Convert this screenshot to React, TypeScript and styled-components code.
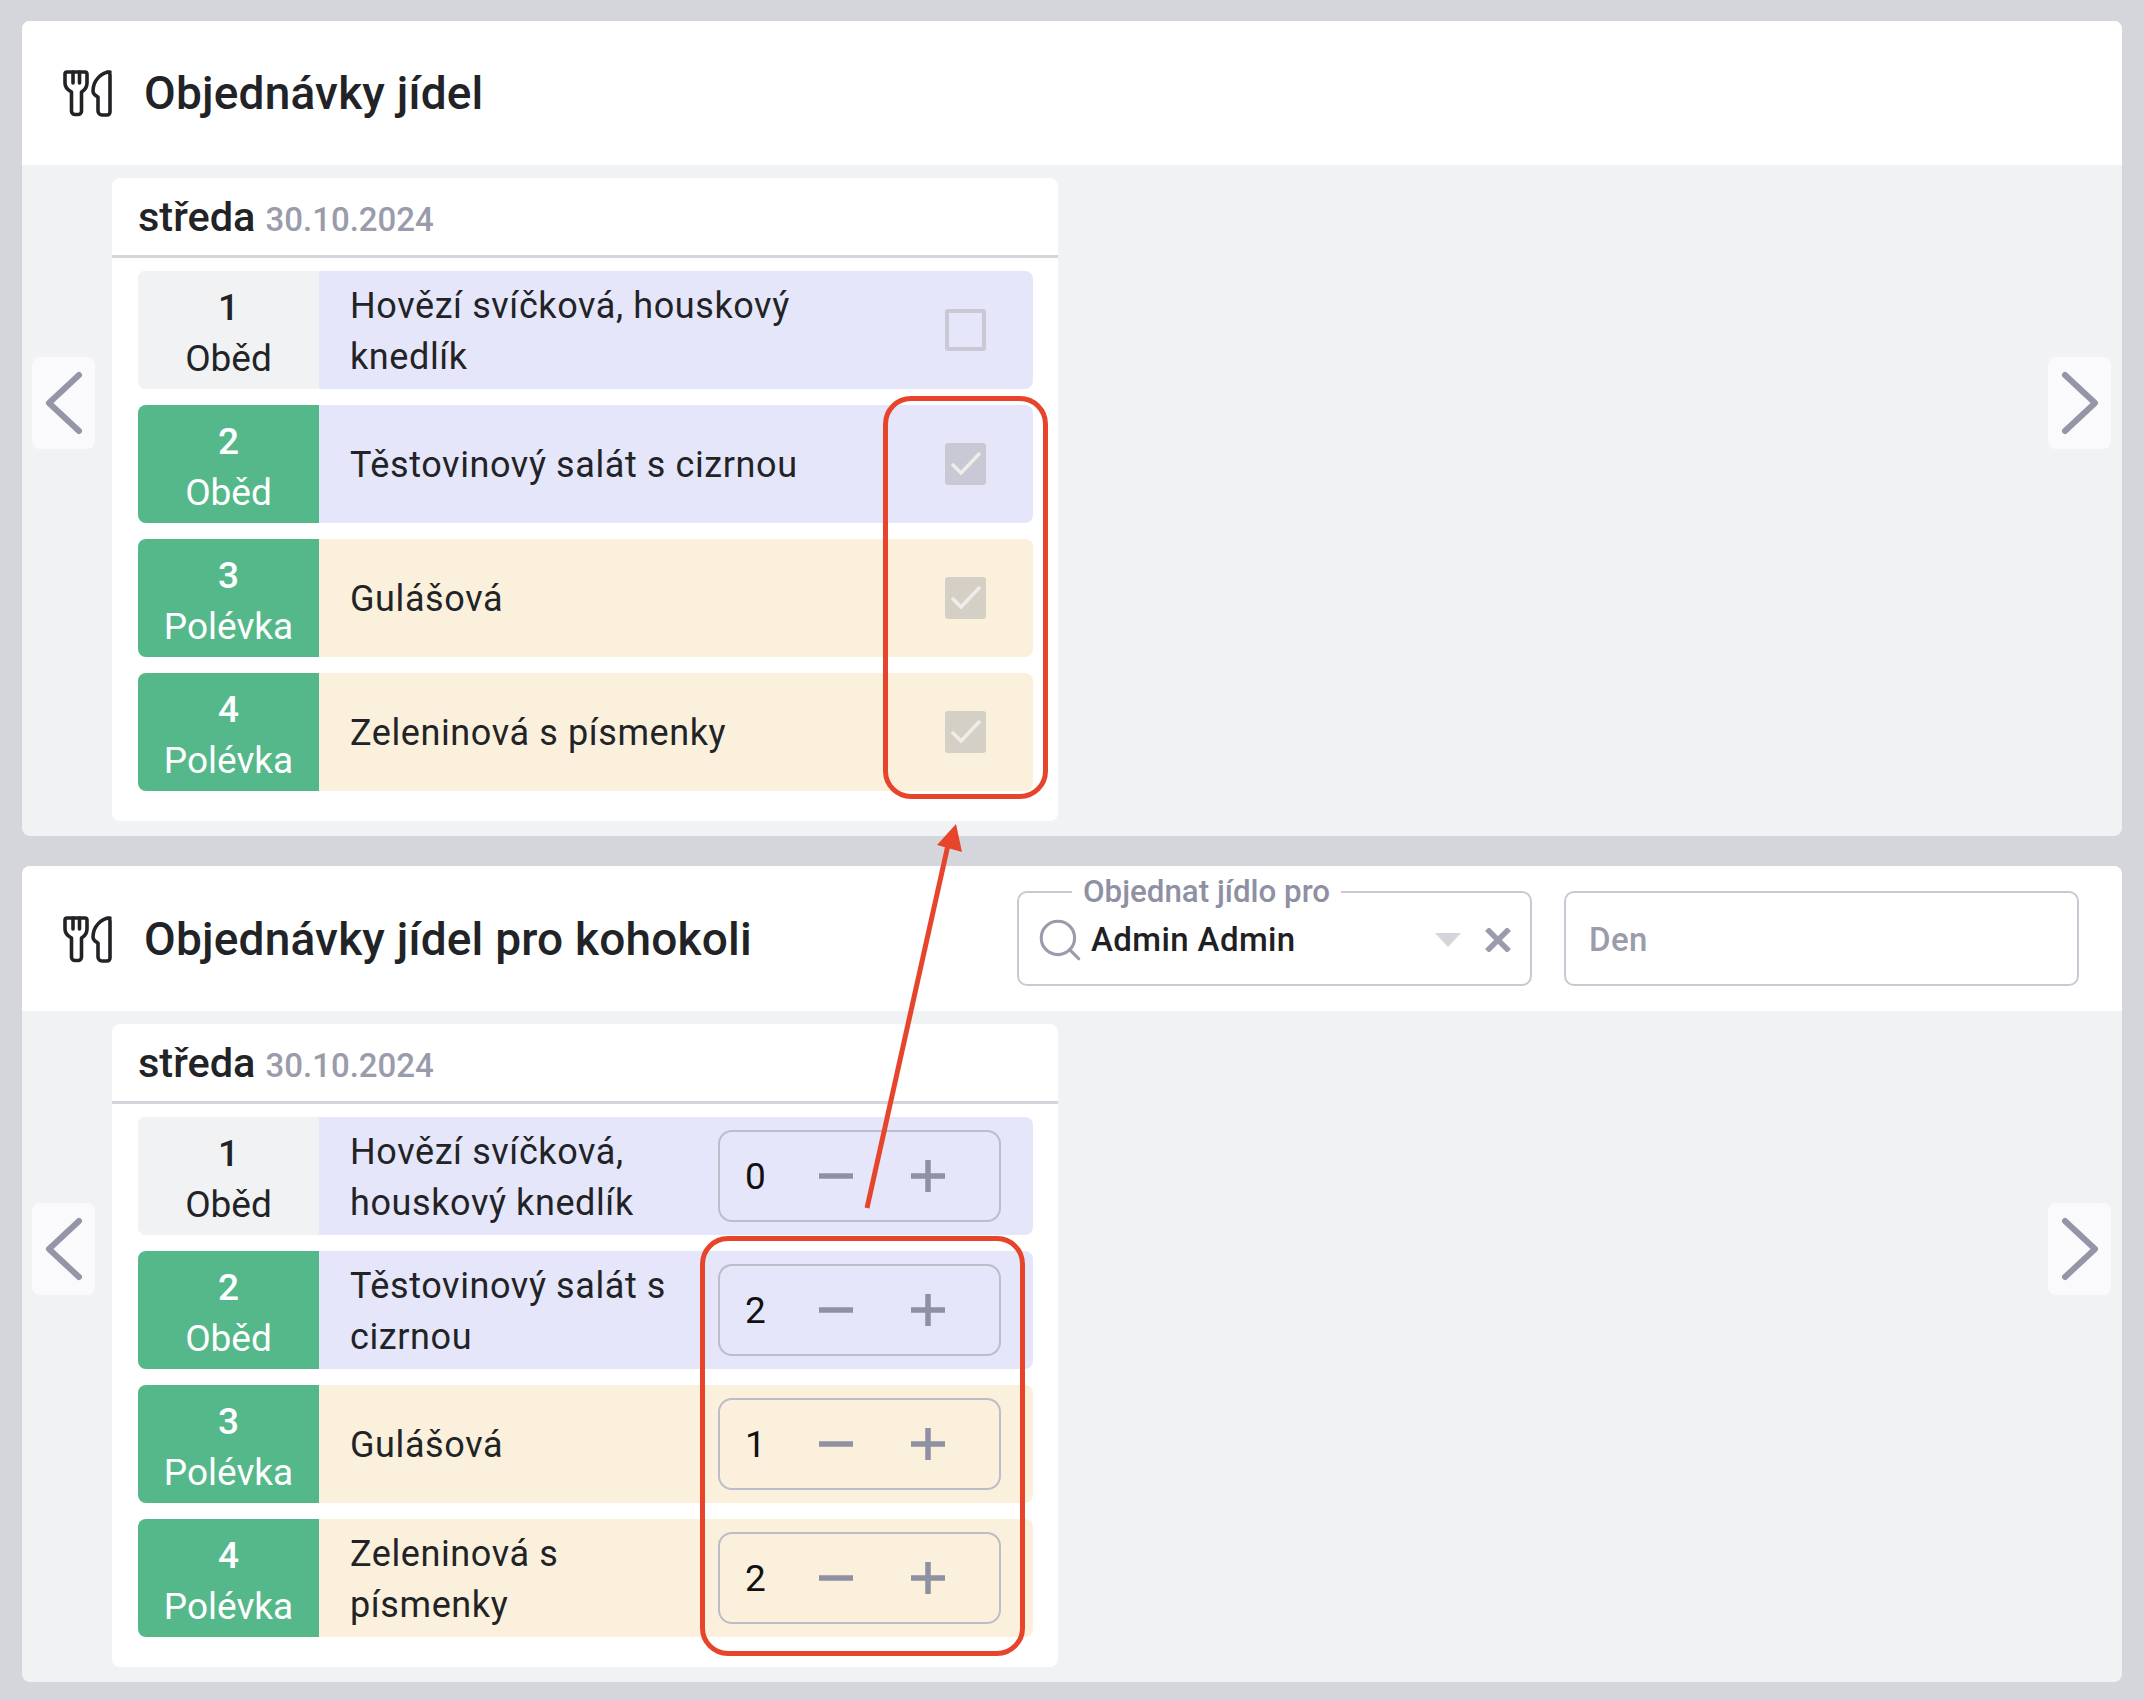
import React from "react";
import styled, { createGlobalStyle } from "styled-components";
import { Search } from "lucide-react";

const GlobalStyle = createGlobalStyle`
  html, body {
    margin: 0;
    padding: 0;
    background: #d5d6dc;
  }
  body {
    font-family: Roboto, "Liberation Sans", sans-serif;
    color: #222326;
  }
`;

const Page = styled.div`
  position: relative;
  box-sizing: border-box;
  width: 2144px;
  height: 1700px;
  padding: 21px 22px;
  display: flex;
  flex-direction: column;
  gap: 30px;
  overflow: hidden;
`;

const Panel = styled.section`
  flex: none;
  background: #f1f2f4;
  border-radius: 8px;
  overflow: hidden;
`;

const PanelHeader = styled.header<{ $tall?: boolean }>`
  box-sizing: border-box;
  height: ${(p) => (p.$tall ? 145 : 144)}px;
  background: #ffffff;
  display: flex;
  align-items: center;
  padding: 0 43px 0 41px;
`;

const PanelTitle = styled.h1`
  margin: 0 0 0 29px;
  font-size: 46px;
  font-weight: 500;
  letter-spacing: 0.2px;
  white-space: nowrap;
`;

const Filters = styled.div`
  margin-left: auto;
  display: flex;
  gap: 32px;
`;

const Field = styled.div`
  position: relative;
  box-sizing: border-box;
  width: 515px;
  height: 95px;
  background: #fff;
  border: 2px solid #c8c9d2;
  border-radius: 10px;
  display: flex;
  align-items: center;
  padding: 2px 19px 0 23px;
  font-size: 33px;
  font-weight: 500;
  letter-spacing: 0.4px;
  color: #1f2023;
`;

const FieldLabel = styled.span`
  position: absolute;
  top: -19px;
  left: 53px;
  padding: 0 11px;
  background: #fff;
  font-size: 31.3px;
  line-height: 36px;
  letter-spacing: 0;
  color: #8f90a3;
`;

const Placeholder = styled.span`
  color: #9a9bab;
`;

const SearchIcon = styled(Search)`
  color: #9a9bab;
  margin: 0 6px 0 -7px;
  flex: none;
`;

const SelectValue = styled.span`
  flex: 1;
`;

const Caret = styled.span`
  width: 0;
  height: 0;
  border-left: 13px solid transparent;
  border-right: 13px solid transparent;
  border-top: 14px solid #d5d6dc;
  margin-right: 24px;
`;

const PanelBody = styled.div`
  display: flex;
  align-items: flex-start;
  padding: 13px 11px 15px 10px;
`;

const NavButton = styled.div<{ $right?: boolean }>`
  flex: none;
  width: 63px;
  height: 92px;
  margin-top: 179px;
  ${(p) => (p.$right ? "margin-left: auto;" : "margin-right: 17px;")}
  background: #fafafd;
  border-radius: 8px;
  display: flex;
  align-items: center;
  justify-content: center;
`;

const DayCard = styled.div`
  flex: none;
  width: 946px;
  background: #fff;
  border-radius: 8px;
`;

const DayHeader = styled.div`
  box-sizing: border-box;
  height: 80px;
  border-bottom: 3px solid #d5d6dc;
  padding: 14px 26px 0;
  font-size: 41.5px;
  line-height: 50px;
  font-weight: 500;
  white-space: nowrap;
`;

const DayDate = styled.span`
  margin-left: 10px;
  font-size: 33px;
  color: #9a9bab;
`;

const Rows = styled.div`
  display: flex;
  flex-direction: column;
  gap: 16px;
  padding: 13px 25px 30px 26px;
`;

const Row = styled.div<{ $soup: boolean }>`
  display: flex;
  align-items: stretch;
  height: 118px;
  border-radius: 8px;
  overflow: hidden;
  background: ${(p) => (p.$soup ? "#fbf0dc" : "#e5e6f9")};
`;

const RowLabel = styled.div<{ $ordered: boolean }>`
  flex: none;
  box-sizing: border-box;
  width: 181px;
  padding-top: 6px;
  background: ${(p) => (p.$ordered ? "#54b88a" : "#f1f2f4")};
  color: ${(p) => (p.$ordered ? "#fff" : "#222326")};
  display: flex;
  flex-direction: column;
  align-items: center;
  justify-content: center;
  font-size: 37px;
  line-height: 51px;
  text-align: center;
`;

const RowNumber = styled.span`
  font-weight: 500;
`;

const RowName = styled.div`
  flex: 1;
  min-width: 0;
  display: flex;
  align-items: center;
  padding: 3px 0 0 31px;
  font-size: 36px;
  line-height: 51px;
  letter-spacing: 0.6px;
`;

const Check = styled.div<{ $checked: boolean; $soup: boolean }>`
  flex: none;
  box-sizing: border-box;
  align-self: center;
  width: 41px;
  height: 42px;
  margin-right: 47px;
  margin-left: 60px;
  border-radius: 3px;
  display: flex;
  align-items: center;
  justify-content: center;
  background: ${(p) =>
    p.$checked ? (p.$soup ? "#d4d0c5" : "#c8c9d4") : "transparent"};
  border: ${(p) => (p.$checked ? "none" : "4px solid #c8c9d4")};
`;

const Stepper = styled.div`
  flex: none;
  box-sizing: border-box;
  align-self: center;
  width: 283px;
  height: 92px;
  margin-left: 28px;
  margin-right: 32px;
  border: 2px solid #bcbdc9;
  border-radius: 14px;
  display: flex;
  align-items: center;
  gap: 56px;
  padding-left: 25px;
  font-size: 37px;
  color: #111;
`;

const StepperValue = styled.span`
  width: 73px;
  margin-right: -56px;
`;

const StepIcon = styled.svg`
  flex: none;
  width: 36px;
  height: 36px;
  stroke: #8f90a3;
  stroke-width: 5.5;
  fill: none;
`;

const Highlight = styled.div<{ $x: number; $y: number; $w: number; $h: number }>`
  position: absolute;
  box-sizing: border-box;
  left: ${(p) => p.$x}px;
  top: ${(p) => p.$y}px;
  width: ${(p) => p.$w}px;
  height: ${(p) => p.$h}px;
  border: 5px solid #e6452c;
  border-radius: 28px;
`;

const ArrowOverlay = styled.svg`
  position: absolute;
  left: 0;
  top: 0;
  width: 2144px;
  height: 1700px;
  pointer-events: none;
`;

type Meal = { id: number; type: string; name: string; soup: boolean; count: number };

const meals: Meal[] = [
  { id: 1, type: "Oběd", name: "Hovězí svíčková, houskový knedlík", soup: false, count: 0 },
  { id: 2, type: "Oběd", name: "Těstovinový salát s cizrnou", soup: false, count: 2 },
  { id: 3, type: "Polévka", name: "Gulášová", soup: true, count: 1 },
  { id: 4, type: "Polévka", name: "Zeleninová s písmenky", soup: true, count: 2 },
];

function CutleryIcon() {
  return (
    <svg width="52" height="48" viewBox="0 0 52 48" fill="none" stroke="#222326" strokeWidth="3.6" strokeLinejoin="round" strokeLinecap="round">
      <path d="M4 3H22a2 2 0 0 1 2 2V14C24 20 20 22 18.5 23V42a3.5 3.5 0 0 1-3.5 3.5h-3A3.5 3.5 0 0 1 8.500 42V23C7 22 2 20 2 14V5a2 2 0 0 1 2-2Z" />
      <path d="M10 3V14M16.500 3V14" />
      <path d="M47 3c-8 0-17 8-17 19 0 3 3 5 5 6V42a4 4 0 0 0 4 4h5a3 3 0 0 0 3-3V6a3 3 0 0 0-3-3Z" />
    </svg>
  );
}

function Chevron({ right }: { right?: boolean }) {
  return (
    <NavButton $right={right}>
      <svg width="40" height="66" viewBox="0 0 40 66" fill="none" stroke="#9495a6" strokeWidth="6" strokeLinecap="round" strokeLinejoin="round">
        {right ? <path d="M5 5l30 28L5 61" /> : <path d="M35 5L5 33l30 28" />}
      </svg>
    </NavButton>
  );
}

function DayPanel({ stepper }: { stepper?: boolean }) {
  return (
    <PanelBody>
      <Chevron />
      <DayCard>
        <DayHeader>
          středa<DayDate>30.10.2024</DayDate>
        </DayHeader>
        <Rows>
          {meals.map((m) => (
            <Row key={m.id} $soup={m.soup}>
              <RowLabel $ordered={m.count > 0}>
                <RowNumber>{m.id}</RowNumber>
                <span>{m.type}</span>
              </RowLabel>
              <RowName>{m.name}</RowName>
              {stepper ? (
                <Stepper>
                  <StepperValue>{m.count}</StepperValue>
                  <StepIcon viewBox="0 0 36 36">
                    <path d="M1 18h34" />
                  </StepIcon>
                  <StepIcon viewBox="0 0 36 36">
                    <path d="M1 18h34M18 2v32" />
                  </StepIcon>
                </Stepper>
              ) : (
                <Check $checked={m.count > 0} $soup={m.soup}>
                  {m.count > 0 && (
                    <svg width="32" height="26" viewBox="0 0 32 26" fill="none" stroke="#efedea" strokeWidth="3.5">
                      <path d="M2 13l9 9L30 2" />
                    </svg>
                  )}
                </Check>
              )}
            </Row>
          ))}
        </Rows>
      </DayCard>
      <Chevron right />
    </PanelBody>
  );
}

export default function App() {
  return (
    <>
      <GlobalStyle />
      <Page>
        <Panel>
          <PanelHeader>
            <CutleryIcon />
            <PanelTitle>Objednávky jídel</PanelTitle>
          </PanelHeader>
          <DayPanel />
        </Panel>
        <Panel>
          <PanelHeader $tall>
            <CutleryIcon />
            <PanelTitle>Objednávky jídel pro kohokoli</PanelTitle>
            <Filters>
              <Field>
                <FieldLabel>Objednat jídlo pro</FieldLabel>
                <SearchIcon size={50} strokeWidth={1.5} />
                <SelectValue>Admin Admin</SelectValue>
                <Caret />
                <svg width="26" height="24" viewBox="0 0 26 24" fill="none" stroke="#9a9bab" strokeWidth="5.5">
                  <path d="M2 1l22 22M24 1L2 23" />
                </svg>
              </Field>
              <Field>
                <Placeholder>Den</Placeholder>
              </Field>
            </Filters>
          </PanelHeader>
          <DayPanel stepper />
        </Panel>
        <Highlight $x={883} $y={396} $w={165} $h={403} />
        <Highlight $x={700} $y={1236} $w={325} $h={420} />
        <ArrowOverlay viewBox="0 0 2144 1700">
          <path d="M867 1208L948 845" stroke="#e6452c" strokeWidth="5" fill="none" />
          <path d="M956 824L937 845L962 852Z" fill="#e6452c" />
        </ArrowOverlay>
      </Page>
    </>
  );
}
